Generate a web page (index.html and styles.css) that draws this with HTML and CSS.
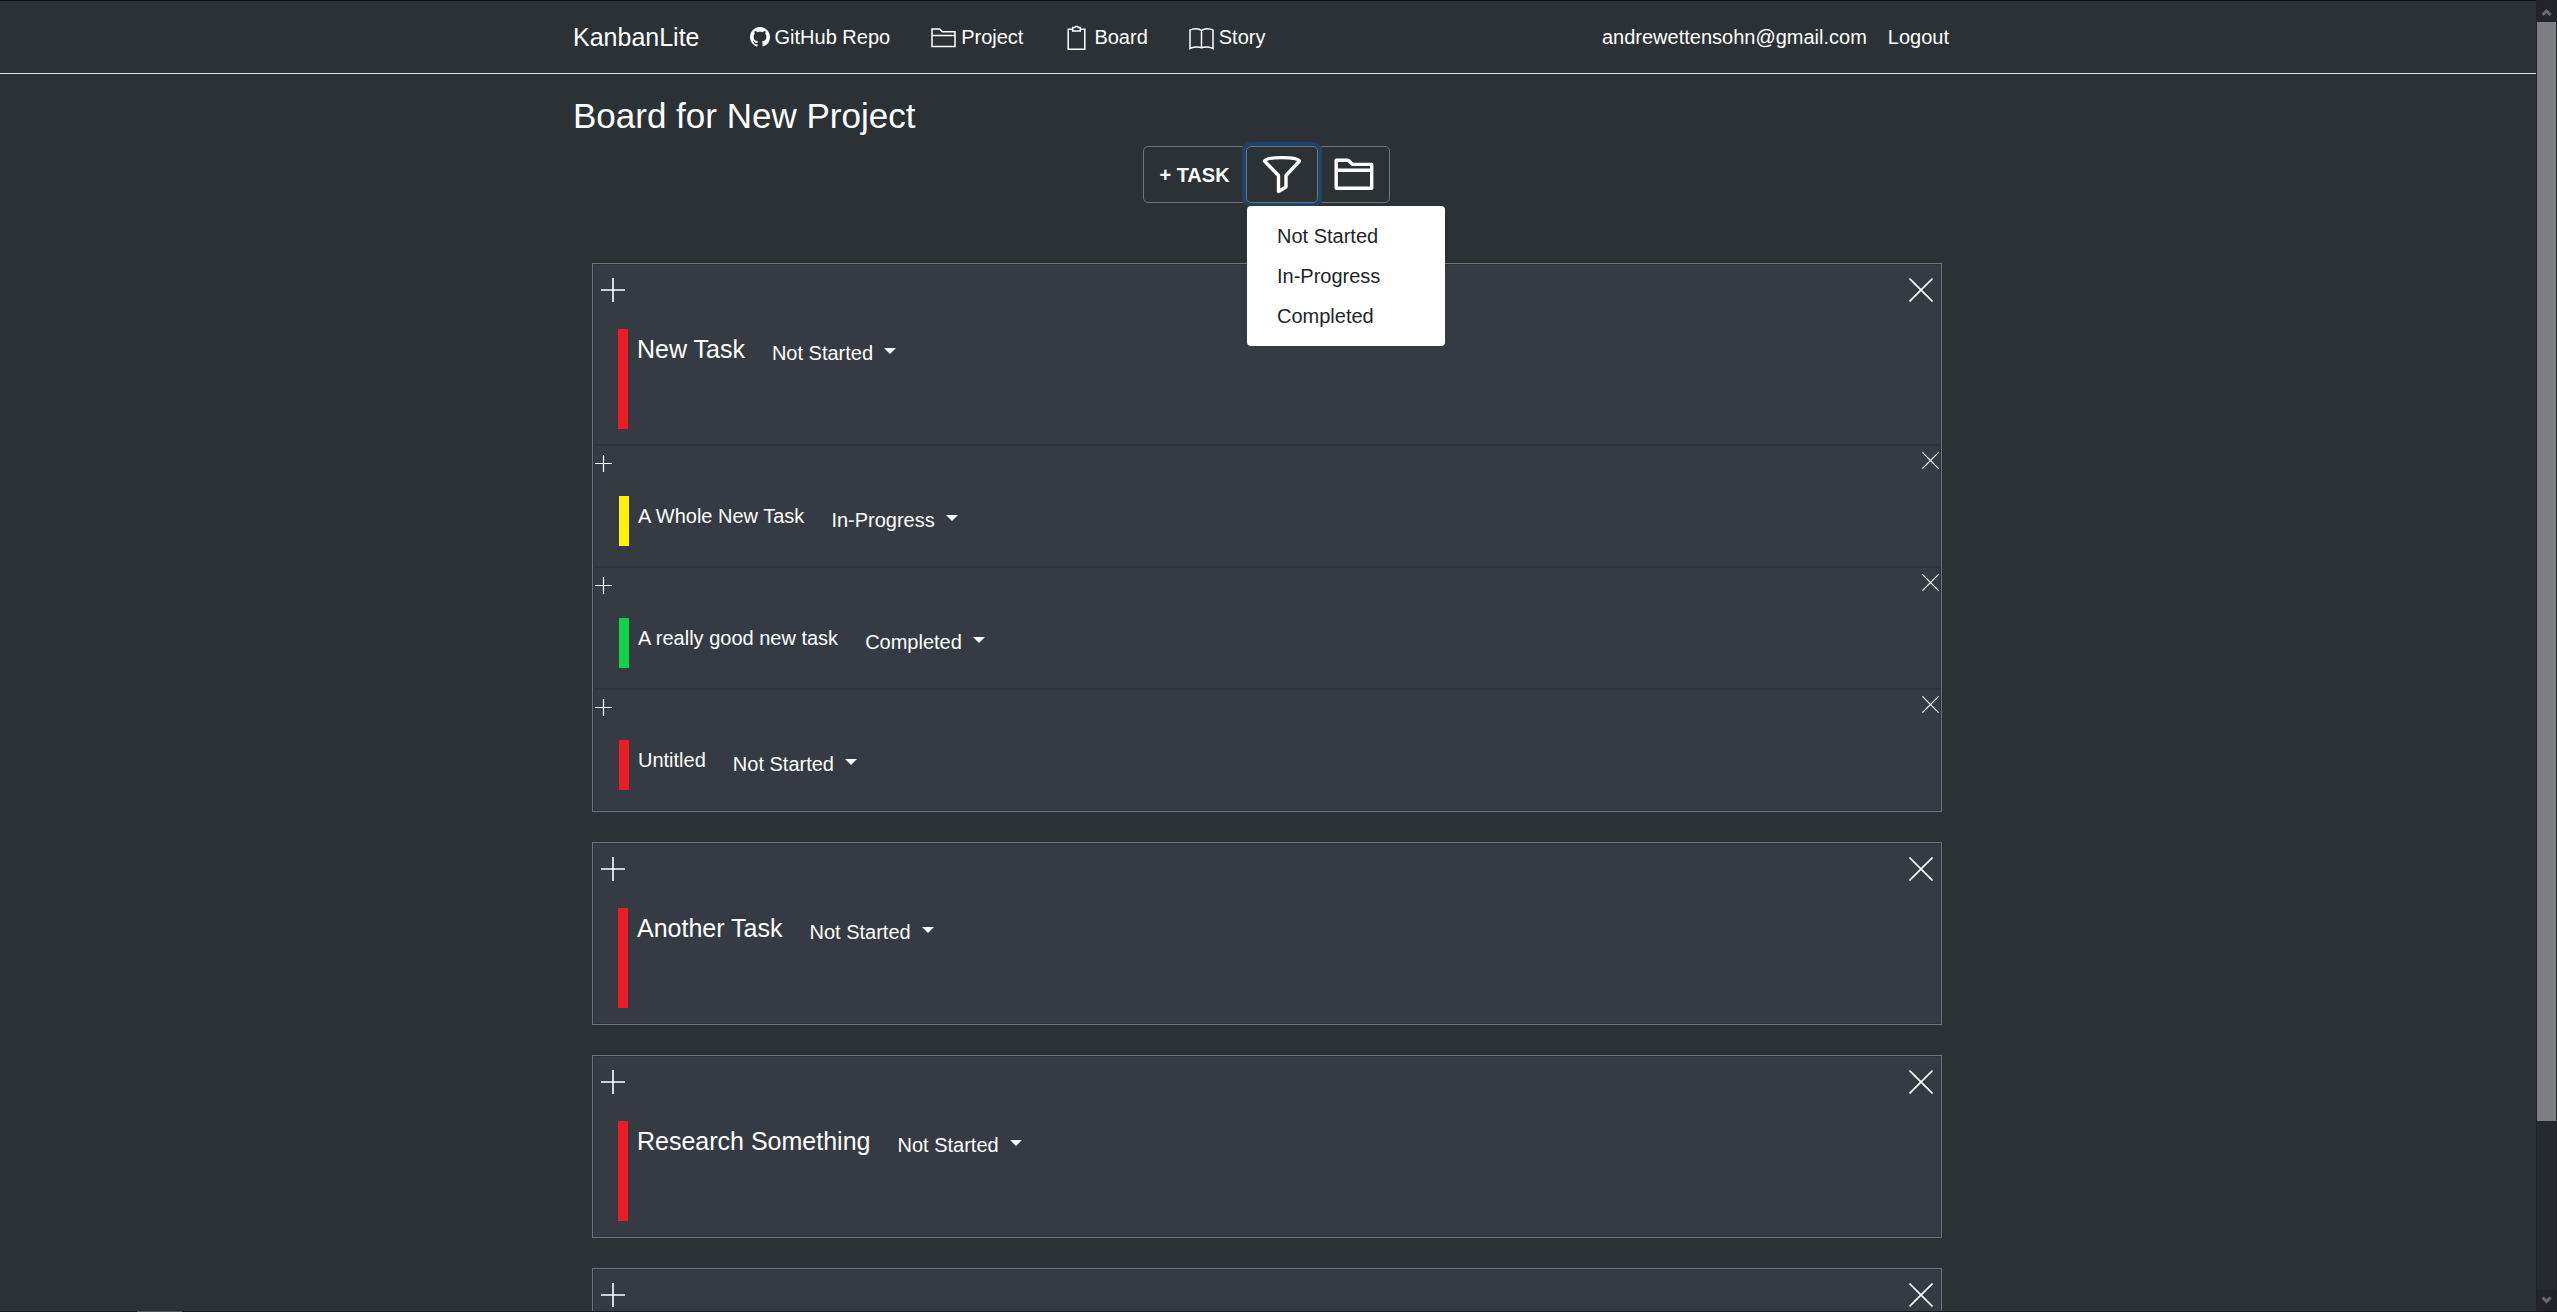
FILE: index.html
```html
<!DOCTYPE html>
<html lang="en">
<head>
<meta charset="utf-8">
<meta name="viewport" content="width=device-width, initial-scale=1">
<title>KanbanLite</title>
<link rel="stylesheet" href="styles.css">
</head>
<body>
<svg class="sprite" aria-hidden="true">
  <symbol id="plus-lg" viewBox="0 0 24 24"><path d="M0 12h24M12 0v24" fill="none" stroke="currentColor" stroke-width="1.6"/></symbol>
  <symbol id="plus-sm" viewBox="0 0 17 17"><path d="M0 8.5h17M8.5 0v17" fill="none" stroke="currentColor" stroke-width="1.2"/></symbol>
  <symbol id="cross" viewBox="0 0 24 24"><path d="M.5.5l23 23M23.5.5l-23 23" fill="none" stroke="currentColor" stroke-width="1.6"/></symbol>
  <symbol id="cross-sm" viewBox="0 0 17 17"><path d="M.4.4l16.200 16.200M16.600.4l-16.200 16.200" fill="none" stroke="currentColor" stroke-width="1.200"/></symbol>
  <symbol id="folder" viewBox="0 0 25 25"><path d="M1 21.500V4h7.500l3 2.800H24v14.700zM1 10.500h23" fill="none" stroke="currentColor" stroke-width="1.500"/></symbol>
</svg>
<div class="page">
  <nav class="navbar">
    <div class="container navbar-inner">
      <a class="brand" href="#">KanbanLite</a>
      <ul class="nav-links">
        <li><a href="#"><svg class="icon-gh" viewBox="0 0 16 16" aria-hidden="true"><path fill="currentColor" d="M8 0C3.580 0 0 3.580 0 8c0 3.540 2.290 6.530 5.470 7.590.4.070.55-.17.55-.38 0-.19-.01-.82-.01-1.490-2.010.37-2.530-.49-2.690-.94-.09-.23-.48-.94-.82-1.130-.28-.15-.68-.52-.01-.53.63-.01 1.080.58 1.230.82.72 1.210 1.870.87 2.330.66.070-.52.28-.87.51-1.070-1.780-.2-3.640-.89-3.640-3.950 0-.87.31-1.590.82-2.150-.08-.2-.36-1.020.08-2.120 0 0 .67-.21 2.200.82.64-.18 1.320-.27 2-.27s1.360.09 2 .27c1.530-1.040 2.200-.82 2.200-.82.44 1.100.16 1.920.08 2.120.51.56.82 1.270.82 2.150 0 3.070-1.870 3.750-3.650 3.950.29.25.54.73.54 1.480 0 1.070-.01 1.930-.01 2.200 0 .21.15.46.55.38A8.010 8.010 0 0016 8c0-4.420-3.580-8-8-8z"/></svg>GitHub Repo</a></li>
        <li><a href="#"><svg class="icon" aria-hidden="true"><use href="#folder"/></svg>Project</a></li>
        <li><a href="#"><svg class="icon" viewBox="0 -1 25 25" aria-hidden="true"><path d="M8.500 3.200H4.200v20h16.600v-20h-4.300M8.700 1.500h2l.8-1h2l.8 1h2v3.500H8.700z" fill="none" stroke="currentColor" stroke-width="1.500"/></svg>Board</a></li>
        <li><a href="#"><svg class="icon" viewBox="0 0 25 25" aria-hidden="true"><path d="M12.500 5.500v17.200M12.500 5.500C10 3.200 4 3.200 1 5.200v18.300c3-2 9-2 11.500-.8 2.500-1.200 8.500-1.200 11.500.8V5.200c-3-2-9-2-11.500.3z" fill="none" stroke="currentColor" stroke-width="1.500"/></svg>Story</a></li>
      </ul>
      <div class="account">
        <span>andrewettensohn@gmail.com</span>
        <a href="#">Logout</a>
      </div>
    </div>
  </nav>

  <main class="container">
    <h1 class="board-title">Board for New Project</h1>
    <div class="toolbar">
      <button class="tool tool-task" type="button">+ TASK</button>
      <div class="dropdown">
        <button class="tool tool-icon tool-focus" type="button" aria-label="Filter" aria-haspopup="true" aria-expanded="true">
          <svg class="icon-lg" viewBox="0 0 40 40" aria-hidden="true"><path d="M2.500 6C5 1.500 35 1.500 37.500 6L24 20.500V32l-7.500 4.500v-16z" fill="none" stroke="currentColor" stroke-width="3.400" stroke-linejoin="round"/></svg>
        </button>
        <ul class="menu">
          <li><button type="button">Not Started</button></li>
          <li><button type="button">In-Progress</button></li>
          <li><button type="button">Completed</button></li>
        </ul>
      </div>
      <button class="tool tool-icon" type="button" aria-label="Projects">
        <svg class="icon-lg" viewBox="0 0 40 40" aria-hidden="true"><path d="M2.200 33.300V5.200h12l4.500 4.200h19v23.900zM2.200 15.200h35.500" fill="none" stroke="currentColor" stroke-width="3.400" stroke-linejoin="round"/></svg>
      </button>
    </div>

    <div class="cards">
      <article class="card">
        <section class="task">
          <div class="task-actions">
            <button type="button" aria-label="Add subtask"><svg aria-hidden="true"><use href="#plus-lg"/></svg></button>
            <button type="button" aria-label="Delete task"><svg aria-hidden="true"><use href="#cross"/></svg></button>
          </div>
          <div class="task-body">
            <span class="bar red"></span>
            <h2>New Task</h2>
            <button class="status" type="button" aria-haspopup="true">Not Started<span class="caret"></span></button>
          </div>
        </section>
        <section class="task subtask">
          <div class="task-actions">
            <button class="add" type="button" aria-label="Add subtask"><svg aria-hidden="true"><use href="#plus-sm"/></svg></button>
            <button type="button" aria-label="Delete subtask"><svg aria-hidden="true"><use href="#cross-sm"/></svg></button>
          </div>
          <div class="task-body">
            <span class="bar yellow"></span>
            <h3>A Whole New Task</h3>
            <button class="status" type="button" aria-haspopup="true">In-Progress<span class="caret"></span></button>
          </div>
        </section>
        <section class="task subtask">
          <div class="task-actions">
            <button class="add" type="button" aria-label="Add subtask"><svg aria-hidden="true"><use href="#plus-sm"/></svg></button>
            <button type="button" aria-label="Delete subtask"><svg aria-hidden="true"><use href="#cross-sm"/></svg></button>
          </div>
          <div class="task-body">
            <span class="bar green"></span>
            <h3>A really good new task</h3>
            <button class="status" type="button" aria-haspopup="true">Completed<span class="caret"></span></button>
          </div>
        </section>
        <section class="task subtask">
          <div class="task-actions">
            <button class="add" type="button" aria-label="Add subtask"><svg aria-hidden="true"><use href="#plus-sm"/></svg></button>
            <button type="button" aria-label="Delete subtask"><svg aria-hidden="true"><use href="#cross-sm"/></svg></button>
          </div>
          <div class="task-body">
            <span class="bar red"></span>
            <h3>Untitled</h3>
            <button class="status" type="button" aria-haspopup="true">Not Started<span class="caret"></span></button>
          </div>
        </section>
      </article>

      <article class="card">
        <section class="task">
          <div class="task-actions">
            <button type="button" aria-label="Add subtask"><svg aria-hidden="true"><use href="#plus-lg"/></svg></button>
            <button type="button" aria-label="Delete task"><svg aria-hidden="true"><use href="#cross"/></svg></button>
          </div>
          <div class="task-body">
            <span class="bar red"></span>
            <h2>Another Task</h2>
            <button class="status" type="button" aria-haspopup="true">Not Started<span class="caret"></span></button>
          </div>
        </section>
      </article>

      <article class="card">
        <section class="task">
          <div class="task-actions">
            <button type="button" aria-label="Add subtask"><svg aria-hidden="true"><use href="#plus-lg"/></svg></button>
            <button type="button" aria-label="Delete task"><svg aria-hidden="true"><use href="#cross"/></svg></button>
          </div>
          <div class="task-body">
            <span class="bar red"></span>
            <h2>Research Something</h2>
            <button class="status" type="button" aria-haspopup="true">Not Started<span class="caret"></span></button>
          </div>
        </section>
      </article>

      <article class="card">
        <section class="task">
          <div class="task-actions">
            <button type="button" aria-label="Add subtask"><svg aria-hidden="true"><use href="#plus-lg"/></svg></button>
            <button type="button" aria-label="Delete task"><svg aria-hidden="true"><use href="#cross"/></svg></button>
          </div>
          <div class="task-body">
            <span class="bar red"></span>
          </div>
        </section>
      </article>
    </div>
  </main>
</div>
<div class="scrollbar" aria-hidden="true">
  <svg class="arrow" viewBox="0 0 19 21"><path d="M5.500 14l4-4 4 4" fill="none" stroke="#6b6c70" stroke-width="3"/></svg>
  <div class="track"><div class="thumb"></div></div>
  <svg class="arrow" viewBox="0 0 19 21"><path d="M5.500 7.500l4 4 4-4" fill="none" stroke="#6b6c70" stroke-width="3"/></svg>
</div>
<div class="window-edge"></div>
</body>
</html>
```

FILE: styles.css
```css
* {
  box-sizing: border-box;
}

html {
  overflow: hidden;
}

body {
  display: flex;
  height: 100vh;
  margin: 0;
  overflow: hidden;
  background: #2c3135;
  color: #fff;
  font: 20px/30px "Liberation Sans", Arial, sans-serif;
}

h1, h2, h3, ul {
  margin: 0;
  padding: 0;
  font-weight: 400;
  list-style: none;
}

a {
  color: inherit;
  text-decoration: none;
}

button {
  margin: 0;
  padding: 0;
  border: 0;
  background: none;
  color: inherit;
  font: inherit;
  cursor: pointer;
}

svg {
  display: block;
}

.sprite {
  position: absolute;
  width: 0;
  height: 0;
}

.page {
  flex: 1;
  min-width: 0;
  border-top: 1px solid #0c0d0e;
}

.container {
  width: 100%;
  max-width: 1428px;
  margin: 0 auto;
  padding: 0 19px;
}

/* Navigation */
.navbar {
  padding: 21px 0;
  border-bottom: 1px solid #dee2e6;
}

.navbar-inner,
.nav-links,
.nav-links a,
.account {
  display: flex;
  align-items: center;
}

.brand {
  margin-right: 50px;
  font-size: 25px;
}

.nav-links {
  gap: 41px;
}

.nav-links a {
  gap: 5px;
}

.icon {
  width: 25px;
  height: 25px;
}

.icon-gh {
  width: 20px;
  height: 20px;
}

.account {
  gap: 21px;
  margin-left: auto;
  padding-right: 14px;
}

/* Board header */
.board-title {
  padding-top: 21px;
  font-size: 35px;
  line-height: 42px;
}

.toolbar {
  display: flex;
  justify-content: center;
  margin: 9px 3px 60px 0;
}

.tool {
  display: flex;
  align-items: center;
  justify-content: center;
  height: 57px;
  border: 1px solid #6c757d;
  border-radius: 5px;
}

.tool-task {
  width: 103px;
  font-weight: 700;
}

.tool-icon {
  width: 72px;
}

.tool-focus {
  position: relative;
  box-shadow: 0 0 0 4px #20436b;
}

.icon-lg {
  width: 40px;
  height: 40px;
}

.dropdown {
  position: relative;
}

.menu {
  position: absolute;
  top: 60px;
  left: 1px;
  z-index: 1;
  width: 198px;
  padding: 10px 0;
  border-radius: 4px;
  background: #fff;
  color: #212529;
}

.menu button {
  width: 100%;
  padding: 5px 30px;
  text-align: left;
}

/* Task cards */
.cards {
  display: flex;
  flex-direction: column;
  gap: 30px;
  padding: 0 21px 0 19px;
}

.card {
  border: 1px solid #6c757d;
  background: #363a42;
}

.task {
  padding: 13px 7px 15px;
  border: 1px solid #30333b;
}

.task-actions {
  display: flex;
  align-items: flex-start;
  justify-content: space-between;
  height: 51px;
}

.task-actions svg {
  width: 24px;
  height: 24px;
}

.task-body {
  display: flex;
  align-items: flex-start;
  padding-left: 17px;
}

.bar {
  width: 10px;
  height: 100px;
  margin-right: 9px;
}

.red {
  background: #ed1c24;
}

.yellow {
  background: #fff200;
}

.green {
  background: #12d245;
}

.task h2,
.task h3 {
  padding-top: 5px;
  font-size: 25px;
  line-height: 30px;
}

.task h3 {
  font-size: 20px;
}

.status {
  display: flex;
  align-items: center;
  gap: 11px;
  margin: 9px 0 0 27px;
}

.caret {
  margin-bottom: 4px;
  border: 6px solid transparent;
  border-top-color: #fff;
  border-bottom: 0;
}

.subtask {
  padding: 6px 1px 20px;
}

.subtask .task-actions {
  height: 44px;
}

.subtask .task-actions svg {
  width: 17px;
  height: 17px;
}

.subtask .add {
  padding-top: 3px;
}

.subtask .task-body {
  padding-left: 24px;
}

.subtask .bar {
  height: 50px;
}

/* Scrollbar and window frame */
.scrollbar {
  display: flex;
  flex-direction: column;
  width: 21px;
  border: 1px solid #1f2226;
  background: #262930;
}

.arrow {
  width: 19px;
  height: 21px;
  background: #232429;
}

.track {
  display: flex;
  flex: 1;
  flex-direction: column;
}

.track::after {
  flex: 2;
  content: "";
}

.thumb {
  flex: 13;
  background: #7d7e82;
}

.window-edge {
  position: fixed;
  right: 0;
  bottom: 0;
  left: 0;
  height: 1px;
  background: linear-gradient(90deg, transparent 137px, #55585a 137px 182px, transparent 182px), #17191b;
}
```
